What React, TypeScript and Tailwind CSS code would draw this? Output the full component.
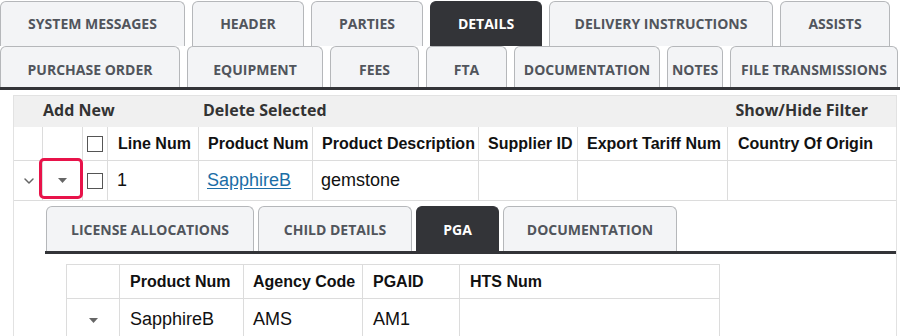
import { ChevronDown } from 'lucide-react'

const topRow1 = [
  { label: 'SYSTEM MESSAGES', w: 'w-[185px]' },
  { label: 'HEADER', w: 'w-[112px]' },
  { label: 'PARTIES', w: 'w-[112px]' },
  { label: 'DETAILS', w: 'w-[112px]', active: true },
  { label: 'DELIVERY INSTRUCTIONS', w: 'w-[224px]' },
  { label: 'ASSISTS', w: 'w-[110px]' },
]

const topRow2 = [
  { label: 'PURCHASE ORDER', w: 'w-[180px]' },
  { label: 'EQUIPMENT', w: 'w-[136px]' },
  { label: 'FEES', w: 'w-[89px]' },
  { label: 'FTA', w: 'w-[81px]' },
  { label: 'DOCUMENTATION', w: 'w-[146px]' },
  { label: 'NOTES', w: 'w-[56px]' },
  { label: 'FILE TRANSMISSIONS', w: 'w-[168px]' },
]

const subTabs = [
  { label: 'LICENSE ALLOCATIONS', w: 'w-[208px]' },
  { label: 'CHILD DETAILS', w: 'w-[154px]' },
  { label: 'PGA', w: 'w-[83px]', active: true },
  { label: 'DOCUMENTATION', w: 'w-[174px]' },
]

type Tab = { label: string; w: string; active?: boolean }

function TabButton({ tab, h, pad = '' }: { tab: Tab; h: string; pad?: string }) {
  return (
    <div
      className={`${tab.w} ${h} ${pad} flex items-center justify-center whitespace-nowrap rounded-t-[6px] border border-b-0 text-[14px] font-bold ${
        tab.active
          ? 'bg-[#333438] border-[#333438] text-white'
          : 'bg-[#f3f4f6] border-[#b5b7ba] text-[#51555c]'
      }`}
    >
      {tab.label}
    </div>
  )
}

function Caret() {
  return (
    <svg width="9" height="5" viewBox="0 0 9 5">
      <path d="M0 0 L9 0 L4.5 5 Z" fill="#666" />
    </svg>
  )
}

function Checkbox() {
  return <div className="w-4 h-4 border-[1.5px] border-[#555] bg-white" />
}

export default function App() {
  const cell = 'border-l border-[#dcdcdc] flex items-center'

  return (
    <div className="w-[900px] h-[336px] overflow-hidden bg-white font-['Open_Sans',sans-serif]">
      <div className="flex gap-[7px] mt-px">
        {topRow1.map((t) => (
          <TabButton key={t.label} tab={t} h="h-[45px]" pad="pb-[1px]" />
        ))}
      </div>
      <div className="flex gap-[7px]">
        {topRow2.map((t) => (
          <TabButton key={t.label} tab={t} h="h-[41px]" pad="pt-[4px]" />
        ))}
      </div>
      <div className="h-[3px] bg-[#333438]" />

      <div className="ml-[13px] mt-[5px] w-[884px] border border-[#e2e2e2] border-b-0">
        <div className="h-[31px] bg-[#f0f0f0] flex items-center pl-[29px] pr-[28px] pb-[4px] text-[16px] font-bold text-[#333]">
          <span className="w-[160px]">Add New</span>
          <span>Delete Selected</span>
          <span className="ml-auto">Show/Hide Filter</span>
        </div>

        <div className="flex h-[34px] border-b border-[#dcdcdc] font-['Liberation_Sans',Arial,sans-serif] font-bold text-[16px] text-[#111]">
          <div className="w-[28px]" />
          <div className={`${cell} w-[40px]`} />
          <div className={`${cell} w-[25px] pl-[4px]`}>
            <Checkbox />
          </div>
          <div className={`${cell} w-[91px] pl-[10px]`}>Line Num</div>
          <div className={`${cell} w-[114px] pl-[9px]`}>Product Num</div>
          <div className={`${cell} w-[166px] pl-[9px]`}>Product Description</div>
          <div className={`${cell} w-[99px] pl-[9px]`}>Supplier ID</div>
          <div className={`${cell} w-[150px] pl-[9px]`}>Export Tariff Num</div>
          <div className={`${cell} flex-1 pl-[10px]`}>Country Of Origin</div>
        </div>

        <div className="flex h-[40px] border-b border-[#dcdcdc] font-['Liberation_Sans',Arial,sans-serif] text-[18px] text-[#111]">
          <div className="w-[28px] flex items-center justify-center pl-[1px]">
            <ChevronDown size={16} strokeWidth={2.25} className="text-[#666]" />
          </div>
          <div className={`${cell} w-[40px] justify-center relative`}>
            <Caret />
            <div className="absolute left-[-4px] right-[-1px] top-[-3px] bottom-[1px] border-[3px] border-[#e8134a] rounded-[5px]" />
          </div>
          <div className={`${cell} w-[25px] pl-[4px]`}>
            <Checkbox />
          </div>
          <div className={`${cell} w-[91px] pl-[9px]`}>1</div>
          <div className={`${cell} w-[114px] pl-[8px]`}>
            <span className="text-[#1b6ea6] underline underline-offset-2">SapphireB</span>
          </div>
          <div className={`${cell} w-[166px] pl-[8px]`}>gemstone</div>
          <div className={`${cell} w-[99px]`} />
          <div className={`${cell} w-[150px]`} />
          <div className={`${cell} flex-1`} />
        </div>

        <div className="pl-[31px] pt-[5px] h-[200px]">
          <div className="flex gap-[4px] pl-px">
            {subTabs.map((t) => (
              <TabButton key={t.label} tab={t} h="h-[45px]" />
            ))}
          </div>
          <div className="h-[3px] bg-[#333438]" />

          <div className="ml-[21px] mt-[10px] w-[654px] border border-[#dcdcdc] font-['Liberation_Sans',Arial,sans-serif] text-[#111]">
            <div className="flex h-[34px] border-b border-[#dcdcdc] font-bold text-[16px]">
              <div className="w-[52px]" />
              <div className={`${cell} w-[124px] pl-[10px]`}>Product Num</div>
              <div className={`${cell} w-[119px] pl-[9px]`}>Agency Code</div>
              <div className={`${cell} w-[97px] pl-[10px]`}>PGAID</div>
              <div className={`${cell} flex-1 pl-[10px]`}>HTS Num</div>
            </div>
            <div className="flex h-[40px] text-[18px]">
              <div className="w-[52px] flex items-center justify-center pl-[1px] pt-[2px]">
                <Caret />
              </div>
              <div className={`${cell} w-[124px] pl-[10px]`}>SapphireB</div>
              <div className={`${cell} w-[119px] pl-[9px]`}>AMS</div>
              <div className={`${cell} w-[97px] pl-[10px]`}>AM1</div>
              <div className={`${cell} flex-1`} />
            </div>
          </div>
        </div>
      </div>
    </div>
  )
}
